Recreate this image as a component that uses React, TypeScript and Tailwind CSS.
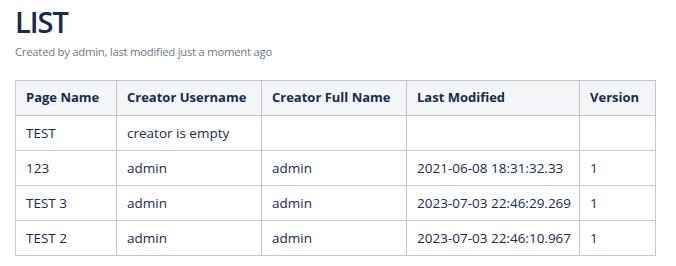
import React from "react";

const rows = [
  ["TEST", "creator is empty", "", "", ""],
  ["123", "admin", "admin", "2021-06-08 18:31:32.33", "1"],
  ["TEST 3", "admin", "admin", "2023-07-03 22:46:29.269", "1"],
  ["TEST 2", "admin", "admin", "2023-07-03 22:46:10.967", "1"],
];

const headers = ["Page Name", "Creator Username", "Creator Full Name", "Last Modified", "Version"];
const widths = ["w-[101px]", "w-[145px]", "w-[145px]", "w-[173px]", "w-[76px]"];

export default function App() {
  return (
    <div className="w-[676px] h-[266px] bg-white pl-[15px] pt-[2px] text-[#172b4d]" style={{ fontFamily: '"Open Sans", "Noto Sans", sans-serif' }}>
      <h1 className="text-[29px] leading-[40px] font-semibold text-[#172b4d] tracking-[-1px]">LIST</h1>
      <div className="text-[11.3px] leading-[18px] text-[#6b778c] mt-[1px] tracking-[-0.25px]">Created by admin, last modified just a moment ago</div>
      <table className="mt-[19px] border-collapse table-fixed w-[640px] text-[13.5px]">
        <thead>
          <tr className="h-[35px] bg-[#f4f5f7]">
            {headers.map((h, i) => (
              <th key={i} className={`${widths[i]} border border-[#c1c7d0] pl-[10px] pr-0 text-left text-[13px] font-bold text-[#172b4d] whitespace-nowrap`}>{h}</th>
            ))}
          </tr>
        </thead>
        <tbody>
          {rows.map((r, ri) => (
            <tr key={ri} className="h-[35px]">
              {r.map((c, ci) => (
                <td key={ci} className="border border-[#c1c7d0] pl-[10px] pr-0 text-[#172b4d] whitespace-nowrap">{c}</td>
              ))}
            </tr>
          ))}
        </tbody>
      </table>
    </div>
  );
}
